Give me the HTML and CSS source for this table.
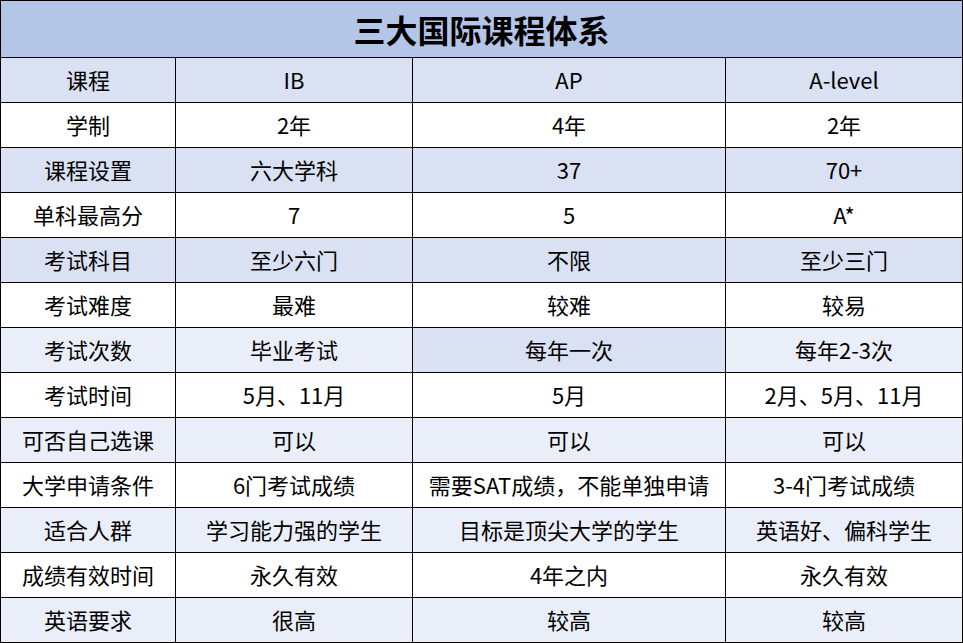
FILE: index.html
```html
<!DOCTYPE html>
<html lang="zh-CN">
<head>
<meta charset="utf-8">
<title>三大国际课程体系</title>
<link rel="stylesheet" href="styles.css">
</head>
<body>
<div class="sheet">
  <div class="cell title">三大国际课程体系</div>

  <div class="cell mid">课程</div><div class="cell mid">IB</div><div class="cell mid">AP</div><div class="cell mid">A-level</div>

  <div class="cell">学制</div><div class="cell">2年</div><div class="cell">4年</div><div class="cell">2年</div>

  <div class="cell mid">课程设置</div><div class="cell mid">六大学科</div><div class="cell mid">37</div><div class="cell mid">70+</div>

  <div class="cell">单科最高分</div><div class="cell">7</div><div class="cell">5</div><div class="cell">A*</div>

  <div class="cell mid">考试科目</div><div class="cell mid">至少六门</div><div class="cell mid">不限</div><div class="cell mid">至少三门</div>

  <div class="cell">考试难度</div><div class="cell">最难</div><div class="cell">较难</div><div class="cell">较易</div>

  <div class="cell light">考试次数</div><div class="cell light">毕业考试</div><div class="cell mid">每年一次</div><div class="cell light">每年2-3次</div>

  <div class="cell">考试时间</div><div class="cell">5月、11月</div><div class="cell">5月</div><div class="cell">2月、5月、11月</div>

  <div class="cell light">可否自己选课</div><div class="cell light">可以</div><div class="cell light">可以</div><div class="cell light">可以</div>

  <div class="cell">大学申请条件</div><div class="cell">6门考试成绩</div><div class="cell">需要SAT成绩，不能单独申请</div><div class="cell">3-4门考试成绩</div>

  <div class="cell light">适合人群</div><div class="cell light">学习能力强的学生</div><div class="cell light">目标是顶尖大学的学生</div><div class="cell light">英语好、偏科学生</div>

  <div class="cell">成绩有效时间</div><div class="cell">永久有效</div><div class="cell">4年之内</div><div class="cell">永久有效</div>

  <div class="cell light">英语要求</div><div class="cell light">很高</div><div class="cell light">较高</div><div class="cell light">较高</div>
</div>
</body>
</html>
```

FILE: styles.css
```css
* {
  box-sizing: border-box;
}

html, body {
  margin: 0;
  padding: 0;
  background: #ffffff;
}

body {
  font-family: "Noto Sans CJK SC", "Noto Sans", sans-serif;
  color: #000000;
}

.sheet {
  display: grid;
  grid-template-columns: 175px 237px 313px 237px;
  grid-auto-rows: 45px;
  grid-template-rows: 57px;
  width: 963px;
  border-right: 1px solid #000;
  border-bottom: 1px solid #000;
}

.cell {
  border-left: 1px solid #000;
  border-top: 1px solid #000;
  display: flex;
  align-items: center;
  justify-content: center;
  font-size: 22px;
  line-height: 1;
  white-space: nowrap;
  background: #ffffff;
  padding-bottom: 2px;
}

.title {
  grid-column: 1 / -1;
  background: #b4c6e7;
  font-size: 32px;
  font-weight: 700;
  padding-bottom: 0;
}

.mid {
  background: #d9e1f2;
}

.light {
  background: #e9eef8;
}
```
